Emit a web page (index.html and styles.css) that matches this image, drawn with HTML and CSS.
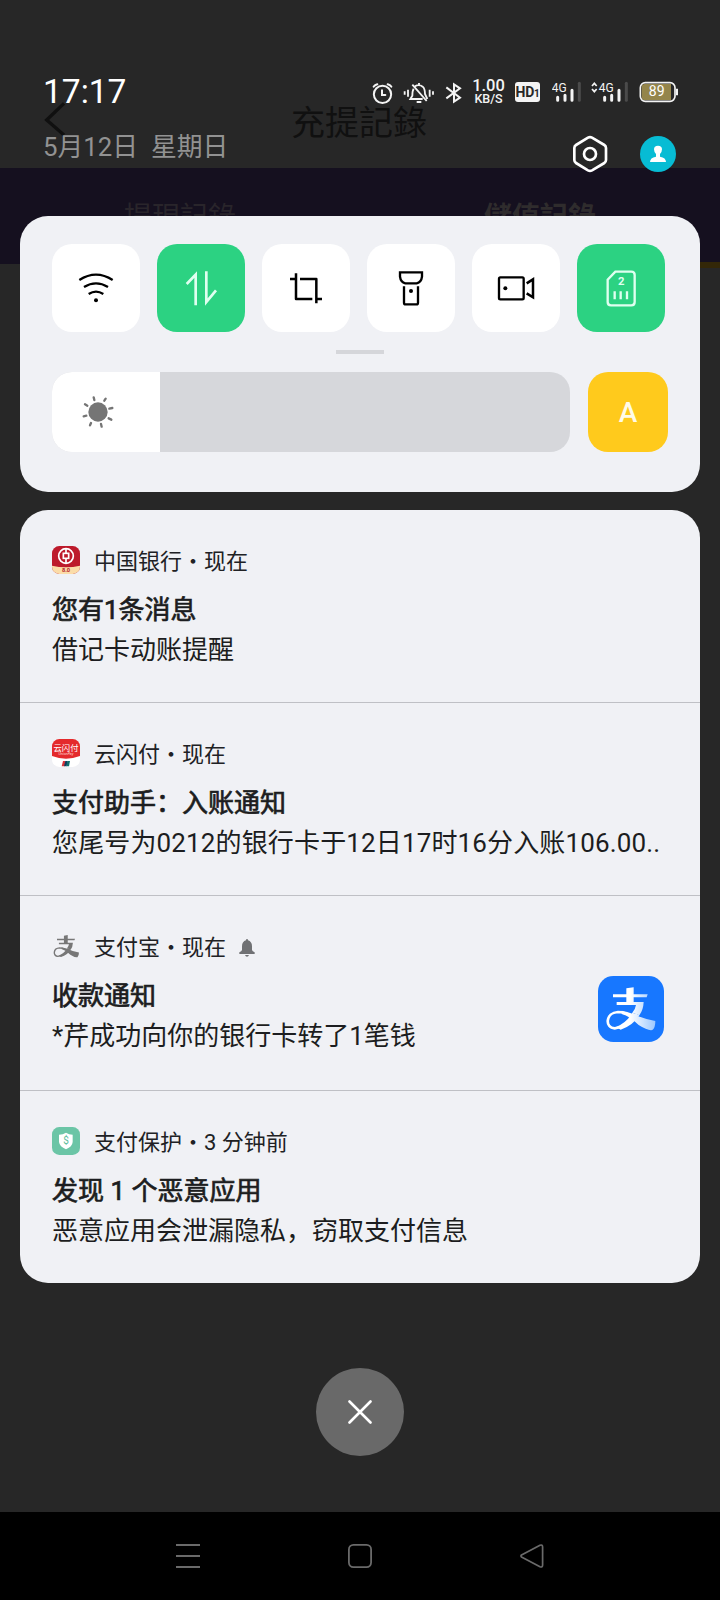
FILE: index.html
```html
<!DOCTYPE html>
<html lang="zh-CN">
<head>
<meta charset="utf-8">
<title>通知中心</title>
<link rel="stylesheet" href="styles.css">
</head>
<body>
<div class="screen">
  <div class="app" aria-hidden="true">
    <div class="app-bar">
      <svg class="app-back" width="22" height="36" viewBox="132 126 66 108"><path d="M192 130L140 180L192 225" fill="none" stroke="#101010" stroke-width="10"/></svg>
      <span class="app-title">充提記錄</span>
    </div>
    <div class="app-tabs">
      <span class="app-tab">提現記錄</span>
      <span class="app-tab app-tab-active">儲值記錄</span>
    </div>
  </div>

  <div class="shade">
    <header class="status">
      <div class="clock">
        <div class="time">17:17</div>
        <div class="date">5月12日&nbsp; 星期日</div>
      </div>
      <div class="status-side">
        <div class="status-icons">
          <svg class="ic-alarm" width="23" height="28" viewBox="33 54 69 84" fill="none" stroke="#f4f4f4" stroke-width="6" stroke-linecap="round"><circle cx="67.500" cy="103" r="26"/><path d="M66 91V105H76M41 80Q45 75 52 73M94 80Q90 75 83 73"/></svg>
          <svg class="ic-mute" width="32" height="28" viewBox="129 54 96 84" fill="none" stroke="#f4f4f4" stroke-width="5.500"><path d="M134 94V104M144 89V110M209 89V110M219 94V104M161 86Q157 92 157 107L151 117H188M165 79Q177 71 188 80Q195 86 195 102L202 117M177 69V76M157 74L200 123M170 126H184"/></svg>
          <svg class="ic-bt" width="17" height="28" viewBox="255 54 51 84" fill="none" stroke="#f4f4f4" stroke-width="6"><path d="M259 82L300 113L282 125V73L300 85L259 115"/></svg>
          <div class="speed"><span>1.00</span><span class="speed-unit">KB/S</span></div>
          <div class="hd">HD<span class="hd-sub">1</span></div>
          <svg class="ic-sig1" width="30" height="28" viewBox="576 54 90 84"><text class="net" x="575" y="95">4G</text><g stroke="#f4f4f4" stroke-width="9" stroke-linecap="round"><path d="M593 112V121M615 106V121M636 91V121"/><path d="M658 70V121" stroke="#4b4b4b"/></g></svg>
          <svg class="ic-sig2" width="38" height="28" viewBox="693 54 114 84"><path d="M696 78L703 70L710 78M696 87L703 95L710 87" fill="none" stroke="#f4f4f4" stroke-width="5"/><text class="net" x="716" y="95">4G</text><g stroke="#f4f4f4" stroke-width="9" stroke-linecap="round"><path d="M734 112V121M755 106V121M777 91V121"/><path d="M799 70V121" stroke="#4b4b4b"/></g></svg>
          <svg class="ic-bat" width="40" height="28" viewBox="837 54 120 84"><rect x="841" y="68" width="104" height="56" rx="15" fill="#272727" stroke="#f4f4f4" stroke-width="5"/><path d="M855 72H933V120H855Q845 120 845 110V82Q845 72 855 72Z" fill="#94854b"/><path d="M951 86V106" stroke="#f4f4f4" stroke-width="6"/><text class="bat" x="890" y="109">89</text></svg>
        </div>
        <div class="status-actions">
          <svg width="36" height="38" viewBox="636 225 108 114" fill="none" stroke="#fff" stroke-width="8" stroke-linejoin="round"><path d="M684 233Q690 230 696 233L733 255Q738 258 738 264V300Q738 306 733 309L696 331Q690 334 684 331L648 309Q643 306 643 300V264Q643 258 648 255Z"/><circle cx="690" cy="282" r="18"/></svg>
          <svg width="36" height="36" viewBox="840 228 108 108"><circle cx="894" cy="282" r="54" fill="#07bcd4"/><path d="M894 257Q906 257 906 268Q906 276 900 282V290Q918 293 918 306H870Q870 293 888 290V282Q882 276 882 268Q882 257 894 257Z" fill="#fff"/></svg>
        </div>
      </div>
    </header>

    <section class="panel">
      <div class="tiles">
        <div class="tile"><svg width="48" height="48" viewBox="156 161 144 144" fill="none" stroke="#000" stroke-width="7"><path d="M178 209Q228 177 278 209M192 230Q228 208 264 230M206 251Q228 237 250 251"/><circle cx="228" cy="270" r="6" fill="#000" stroke="none"/></svg></div>
        <div class="tile tile-on"><svg width="48" height="48" viewBox="471 161 144 144" fill="none" stroke="#dffff0" stroke-width="8"><path d="M500 221L527 193V285M559 183V275L588 240"/></svg></div>
        <div class="tile"><svg width="48" height="48" viewBox="786 161 144 144" fill="none" stroke="#000" stroke-width="7.500"><path d="M828 189V266H877M840 206H889V279M810 206H828M889 266H906" stroke-linejoin="round"/></svg></div>
        <div class="tile"><svg width="48" height="48" viewBox="81 161 144 144" fill="none" stroke="#000" stroke-width="7"><path d="M120 186H186V199Q184 216 170 219H136Q122 216 120 199ZM132 228V277Q132 282 137 282H169Q174 282 174 277V228"/><circle cx="153" cy="242" r="6" fill="#000" stroke="none"/></svg></div>
        <div class="tile"><svg width="48" height="48" viewBox="396 161 144 144" fill="none" stroke="#000" stroke-width="7"><rect x="417" y="201" width="74" height="66" rx="4"/><path d="M500 219L519 207V261L500 249" stroke-width="7.500"/><circle cx="436" cy="234" r="6" fill="#000" stroke="none"/></svg></div>
        <div class="tile tile-on"><svg width="48" height="48" viewBox="711 161 144 144" fill="none" stroke="#dffff0" stroke-width="7"><path d="M766 184H814Q824 184 824 194V275Q824 285 814 285H753Q743 285 743 275V208Z"/><path d="M764 243V267M782 243V267M801 243V267"/><text class="sim" x="784" y="225">2</text></svg></div>
      </div>
      <div class="handle"></div>
      <div class="bright">
        <div class="slider">
          <div class="slider-fill">
            <svg width="36" height="36" viewBox="180 552 108 108"><circle cx="234" cy="606" r="29" fill="#757575"/><path stroke="#757575" stroke-width="7" stroke-linecap="round" d="M243 642L245 650M213 639L210 646M199 617L191 619M202 587L195 583M223 570L221 562M253 572L257 566M268 596L277 594M266 625L274 629"/></svg>
          </div>
        </div>
        <div class="auto">A</div>
      </div>
    </section>

    <section class="list">
      <article class="note">
        <div class="note-main">
          <div class="note-head">
            <svg class="note-icon" width="28" height="28" viewBox="96 138 84 84"><defs><clipPath id="clipBoc"><rect x="96" y="138" width="84" height="84" rx="22"/></clipPath></defs><g clip-path="url(#clipBoc)"><path fill="#bd1a2b" d="M96 138h84v84h-84z"/><path d="M96 197Q138 206 180 197V222H96Z" fill="#fbdca8"/></g><g fill="none" stroke="#fff" stroke-width="5"><circle cx="138" cy="168" r="22"/><rect x="130" y="160" width="16" height="15"/><path d="M138 146V160M138 175V190"/></g><text class="boc" x="138" y="215">8.0</text></svg>
            <span class="note-from">中国银行・现在</span>
          </div>
          <h2 class="note-title">您有1条消息</h2>
          <p class="note-text">借记卡动账提醒</p>
        </div>
      </article>
      <article class="note">
        <div class="note-main">
          <div class="note-head">
            <svg class="note-icon" width="28" height="28" viewBox="96 116 84 84"><defs><clipPath id="clipUp"><rect x="96" y="116" width="84" height="84" rx="22"/></clipPath></defs><g clip-path="url(#clipUp)"><path fill="#fff" d="M96 116h84v84h-84z"/><path d="M96 116H180V167Q138 183 96 167Z" fill="#e42a2c"/></g><text class="up" x="138" y="151">云闪付</text><text class="up-sub" x="138" y="165">UnionPay</text><path d="M129 182H137L134 198H125Z" fill="#d8343a"/><path d="M136 182H143L140 198H132Z" fill="#123b5d"/><path d="M142 182H150L147 198H139Z" fill="#11706e"/></svg>
            <span class="note-from">云闪付・现在</span>
          </div>
          <h2 class="note-title">支付助手：入账通知</h2>
          <p class="note-text note-text-long">您尾号为0212的银行卡于12日17时16分入账106.00..</p>
        </div>
      </article>
      <article class="note note-tall">
        <div class="note-main">
          <div class="note-head">
            <svg class="note-icon" width="28" height="28" viewBox="610 550 162 150"><use href="#alipayMark" fill="#777" stroke="#777"/></svg>
            <span class="note-from">支付宝・现在</span>
            <svg class="bell" width="16" height="18" viewBox="658 146 48 54"><path d="M679 147H685V150Q697 154 697 168V179Q698 183 705 186V191H659V186Q666 183 667 179V168Q667 154 679 150ZM676 194H688Q686 199 682 199Q678 199 676 194Z" fill="#707174"/></svg>
          </div>
          <h2 class="note-title">收款通知</h2>
          <p class="note-text">*芹成功向你的银行卡转了1笔钱</p>
        </div>
        <svg class="alipay" width="66" height="66" viewBox="594 528 198 198">
          <defs>
            <linearGradient id="tail" x1="690" y1="0" x2="766" y2="0" gradientUnits="userSpaceOnUse"><stop offset="0" stop-color="#fff"/><stop offset="1" stop-color="#9cc8ff"/></linearGradient>
            <g id="alipayMark">
              <path stroke="none" d="M679 565L701 562V583H743L740 592H701V606H731Q730 630 718 646L697 638Q706 628 708 615H650V606H679V592H639V583H679Z"/>
              <path fill="none" stroke-width="8" d="M711 643Q682 682 644 685C614 684 616 638 654 636C676 636 694 646 712 655"/>
              <path stroke="none" d="M665 632Q682 635 697 641Q728 656 766 663Q766 684 757 690Q744 693 716 675Q690 649 665 642Z"/>
              <path stroke="none" d="M697 638L718 646Q700 676 662 689L648 681Q682 667 697 638Z"/>
            </g>
          </defs>
          <rect x="594" y="528" width="198" height="198" rx="46" fill="#1777ff"/>
          <use href="#alipayMark" fill="url(#tail)" stroke="#fff"/>
        </svg>
      </article>
      <article class="note">
        <div class="note-main">
          <div class="note-head">
            <svg class="note-icon" width="28" height="28" viewBox="96 111 84 84"><rect x="96" y="111" width="84" height="84" rx="22" fill="#6bc5a6"/><path d="M138 128Q147 134 158 134V156Q157 170 138 178Q119 170 117 156V134Q129 134 138 128Z" fill="#fff"/><text class="pay" x="138" y="162">$</text></svg>
            <span class="note-from">支付保护・3 分钟前</span>
          </div>
          <h2 class="note-title">发现 1 个恶意应用</h2>
          <p class="note-text">恶意应用会泄漏隐私，窃取支付信息</p>
        </div>
      </article>
    </section>

    <button class="clear" type="button" aria-label="清除"><svg width="24" height="24" viewBox="0 0 24 24"><path d="M1.500 1.500L22.500 22.500M22.500 1.500L1.500 22.500" stroke="#fff" stroke-width="2.600" stroke-linecap="round"/></svg></button>

    <nav class="nav">
      <svg width="24" height="24" viewBox="0 0 24 24" stroke="#6a6a6a" stroke-width="2"><path d="M0 1H24M0 12H24M0 23H24"/></svg>
      <svg width="24" height="24" viewBox="0 0 24 24" fill="none" stroke="#6a6a6a" stroke-width="1.800"><rect x=".9" y=".9" width="22.200" height="22.200" rx="4.500"/></svg>
      <svg width="24" height="24" viewBox="0 0 24 24" fill="none" stroke="#6a6a6a" stroke-width="1.700" stroke-linejoin="round"><path d="M1.500 11L20 1.200Q22.600 .4 22.600 3V21Q22.600 23.600 20 22.800L1.500 13Q.4 12 1.500 11Z"/></svg>
    </nav>
  </div>
</div>
</body>
</html>
```
FILE: styles.css
```css
* {
  box-sizing: border-box;
}

body {
  margin: 0;
  background: #272727;
  font-family: Roboto, "Noto Sans CJK SC", sans-serif;
}

svg {
  display: block;
  flex: none;
}

.screen {
  display: grid;
  width: 720px;
  height: 1600px;
  overflow: hidden;
}

.app,
.shade {
  grid-area: 1 / 1;
  min-width: 0;
}

/* Dimmed page behind the notification shade */
.app {
  font-family: "Noto Sans CJK SC", sans-serif;
}

.app-bar {
  display: grid;
  grid-template-columns: 100px 1fr 100px;
  height: 168px;
  padding-top: 102px;
}

.app-back {
  margin-left: 44px;
}

.app-title {
  padding-right: 2px;
  color: #101010;
  font-size: 34px;
  line-height: 37px;
  text-align: center;
}

.app-tabs {
  display: grid;
  grid-template-columns: 1fr 1fr;
  height: 96px;
  background: #15101f;
}

.app-tab {
  color: #29252b;
  font-size: 28px;
  line-height: 94px;
  text-align: center;
}

.app-tab-active {
  border-bottom: 6px solid #332708;
  color: #2f2c2d;
  font-weight: 700;
}

.shade {
  display: flex;
  flex-direction: column;
}

.status {
  display: flex;
  justify-content: space-between;
  height: 216px;
  padding: 74px 41px 0 43px;
}

.time {
  color: #fff;
  font-size: 33.5px;
  line-height: 36px;
}

.date {
  margin-top: 18px;
  color: #929292;
  font-size: 25.8px;
  line-height: 38px;
}

.status-side {
  padding-top: 4px;
}

.status-icons {
  display: flex;
  align-items: center;
  height: 28px;
}

.ic-mute {
  margin-left: 9px;
}

.ic-bt {
  margin-left: 10px;
}

.speed {
  display: flex;
  flex-direction: column;
  width: 33px;
  margin-left: 10px;
  color: #f4f4f4;
  font-size: 16.5px;
  font-weight: 500;
  line-height: 13px;
  text-align: center;
}

.speed-unit {
  font-size: 12.5px;
  line-height: 13px;
}

.hd {
  display: flex;
  align-items: baseline;
  justify-content: center;
  width: 25px;
  height: 20px;
  margin-left: 10px;
  border-radius: 3px;
  background: #f4f4f4;
  color: #272727;
  font-size: 14px;
  font-weight: 700;
  letter-spacing: -0.3px;
  line-height: 20px;
}

.hd-sub {
  font-size: 10px;
}

.ic-sig1 {
  margin-left: 12px;
}

.ic-sig2 {
  margin-left: 9px;
}

.ic-bat {
  margin-left: 10px;
}

.net {
  fill: #f4f4f4;
  font-size: 36px;
}

.bat {
  fill: #fff;
  font-size: 42px;
  text-anchor: middle;
}

.status-actions {
  display: flex;
  justify-content: flex-end;
  align-items: center;
  gap: 32px;
  margin: 29px 3px 0 0;
}

.panel {
  height: 276px;
  margin: 0 20px;
  padding: 28px 32px 0;
  border-radius: 28px;
  background: #f0f1f5;
}

.tiles {
  display: flex;
  gap: 17px;
}

.tile {
  display: grid;
  place-items: center;
  flex: none;
  width: 88px;
  height: 88px;
  border-radius: 20px;
  background: #fff;
}

.tile-on {
  background: #2cd282;
}

.sim {
  fill: #dffff0;
  stroke: none;
  font-size: 34px;
  font-weight: 700;
  text-anchor: middle;
}

.handle {
  width: 48px;
  height: 4px;
  margin: 18px auto;
  background: #d5d6da;
}

.bright {
  display: flex;
  gap: 18px;
}

.slider {
  width: 518px;
  height: 80px;
  overflow: hidden;
  border-radius: 20px;
  background: #d6d7db;
}

.slider-fill {
  display: flex;
  align-items: center;
  width: 108px;
  height: 80px;
  padding-left: 28px;
  background: #fff;
}

.auto {
  width: 80px;
  height: 80px;
  border-radius: 20px;
  background: #ffca1c;
  color: #fffbe8;
  font-size: 28px;
  font-weight: 500;
  line-height: 82px;
  text-align: center;
}

.list {
  margin: 18px 20px 0;
  border-radius: 28px;
  background: #f0f1f5;
}

.note {
  display: flex;
  justify-content: space-between;
  height: 193px;
  padding: 36px 36px 0 32px;
  border-bottom: 1px solid #bfc0c5;
}

.note-tall {
  height: 195px;
}

.note:last-child {
  height: 192px;
  border-bottom: 0;
}

.note-head {
  display: flex;
  align-items: center;
  height: 28px;
  color: #202124;
  font-size: 22px;
  line-height: 28px;
  white-space: nowrap;
}

.note-from {
  padding-top: 4px;
}

.note-icon {
  margin-right: 14px;
}

.bell {
  margin: 3px 0 0 13px;
}

.note-title {
  margin: 17px 0 0;
  color: #1c1d20;
  font-size: 26px;
  font-weight: 400;
  line-height: 38px;
  white-space: nowrap;
  -webkit-text-stroke: 0.7px #1c1d20;
}

.note-text {
  margin: 2px 0 0;
  color: #1c1d20;
  font-size: 26px;
  line-height: 38px;
  white-space: nowrap;
}

.note-text-long {
  letter-spacing: 0.14px;
}

.alipay {
  margin-top: 44px;
}

.boc {
  fill: #b4232a;
  font-size: 17px;
  font-weight: 700;
  text-anchor: middle;
}

.up {
  fill: #fff;
  font-size: 25px;
  text-anchor: middle;
}

.up-sub {
  fill: #ffd9d6;
  font-size: 11px;
  font-style: italic;
  text-anchor: middle;
}

.pay {
  fill: #5bbd9b;
  font-size: 30px;
  text-anchor: middle;
}

.clear {
  display: grid;
  place-items: center;
  width: 88px;
  height: 88px;
  margin: 85px auto 0;
  padding: 0;
  border: 0;
  border-radius: 50%;
  background: #696969;
}

.nav {
  display: flex;
  align-items: center;
  justify-content: space-between;
  height: 88px;
  margin-top: auto;
  padding: 0 176px;
  background: #000;
}
```
